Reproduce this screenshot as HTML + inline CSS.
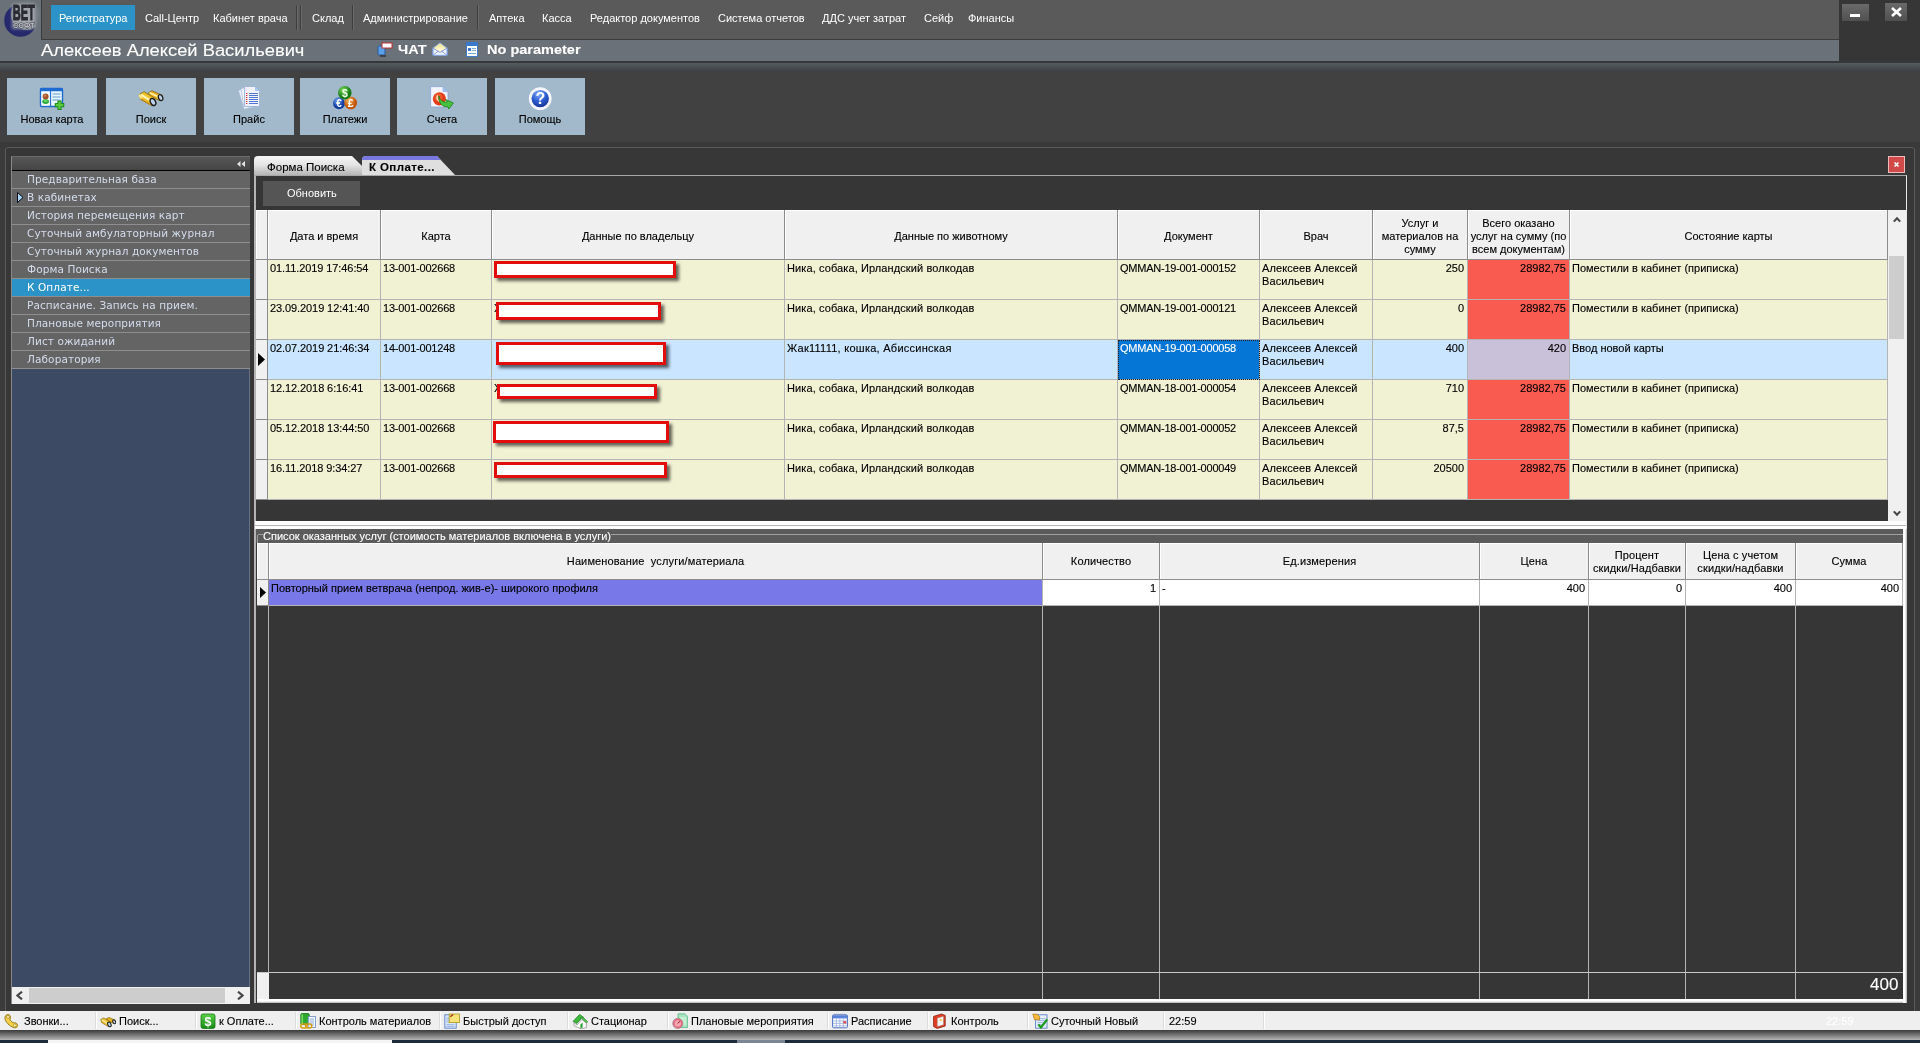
<!DOCTYPE html><html lang="ru"><head><meta charset="utf-8"><title>ВЕТ СОФТ</title><style>
html,body{margin:0;padding:0}
html{background:#3b3b3b}
body{will-change:transform;width:1920px;height:1043px;position:relative;overflow:hidden;background:#3b3b3b;font-family:"Liberation Sans",sans-serif;font-size:11px;line-height:13px;color:#000;-webkit-text-stroke-width:.12px}
body div,body span.t,body svg{position:absolute;box-sizing:border-box}
span.t{white-space:pre}
.w{color:#fff;-webkit-text-stroke-width:0}
.sb{font-family:"DejaVu Sans","Liberation Sans",sans-serif;font-size:10.5px;letter-spacing:.1px;-webkit-text-stroke-width:0;color:#d4dcec}
.hc{display:flex;align-items:center;justify-content:center;text-align:center;background:#f0f0f0;border-right:1px solid #8c8c8c;border-bottom:1px solid #8c8c8c;padding-top:4px;line-height:13px;box-shadow:inset 1px 1px 0 #fff}
.c{border-right:1px solid #b4b4b4;border-bottom:1px solid #b4b4b4;padding:2px 2px 0 2px;overflow:hidden;line-height:13px}
.r{text-align:right;padding-right:3px}
.btn{background:#a1b9ca;text-align:center}
.btn span{position:absolute;left:0;right:0;top:35px;text-align:center;font-size:11px}
.mi{color:#fff;font-size:11px;-webkit-text-stroke-width:0}
.sti{font-size:11px;color:#000}
</style></head><body>
<div style="left:0px;top:0px;width:1839px;height:62px;background:#6a7178"></div>
<div style="left:41px;top:0px;width:1798px;height:40px;background:#5a5a5a;border-left:1px solid #3c3c3c;border-bottom:1px solid #3a3c3e"></div>
<div style="left:1839px;top:0px;width:81px;height:62px;background:#363636"></div>
<div style="left:0px;top:61px;width:1920px;height:2px;background:#34383b"></div>
<div style="left:0px;top:63px;width:1920px;height:9px;background:linear-gradient(#555b60,#3d4043)"></div>
<div style="left:0px;top:72px;width:1920px;height:70px;background:#414141"></div>
<div style="left:0px;top:142px;width:1920px;height:6px;background:#393939"></div>
<svg style="left:0px;top:0px" width="41" height="40" viewBox="0 0 41 40"><defs><filter id="bl" x="-20%" y="-20%" width="140%" height="140%"><feGaussianBlur stdDeviation=".6"/></filter><filter id="b2" x="-30%" y="-30%" width="160%" height="160%"><feGaussianBlur stdDeviation="1.6"/></filter><clipPath id="lc"><circle cx="20.5" cy="20.5" r="16.6"/></clipPath></defs><circle cx="20.5" cy="20.5" r="16.3" fill="#262a6c" filter="url(#bl)"/><g clip-path="url(#lc)"><circle cx="26.5" cy="14.5" r="15.6" fill="#747b84" filter="url(#bl)"/></g><circle cx="27" cy="14" r="13" fill="#747b84" filter="url(#b2)"/><rect x="12" y="4" width="23" height="25" fill="#b4b8be" filter="url(#b2)" opacity=".7"/><text x="12.7" y="13.4" font-family="Liberation Sans, sans-serif" font-weight="bold" font-size="15" fill="#2b2b33" stroke="#2b2b33" stroke-width=".8" textLength="22" lengthAdjust="spacingAndGlyphs" transform="scale(1,1.5)">ВЕТ</text><text x="13" y="28" font-family="Liberation Sans, sans-serif" font-weight="bold" font-size="8" fill="#c4c8d0" stroke="#34363e" stroke-width="1" paint-order="stroke" textLength="21.5" lengthAdjust="spacingAndGlyphs">СОФТ</text></svg>
<div style="left:51px;top:5px;width:84px;height:25px;background:#2b93c8"></div>
<span class="t mi" style="left:59px;top:12px;">Регистратура</span>
<span class="t mi" style="left:145px;top:12px;">Call-Центр</span>
<span class="t mi" style="left:213px;top:12px;">Кабинет врача</span>
<span class="t mi" style="left:312px;top:12px;">Склад</span>
<span class="t mi" style="left:363px;top:12px;">Администрирование</span>
<span class="t mi" style="left:489px;top:12px;">Аптека</span>
<span class="t mi" style="left:542px;top:12px;">Касса</span>
<span class="t mi" style="left:590px;top:12px;">Редактор документов</span>
<span class="t mi" style="left:718px;top:12px;">Система отчетов</span>
<span class="t mi" style="left:822px;top:12px;">ДДС учет затрат</span>
<span class="t mi" style="left:924px;top:12px;">Сейф</span>
<span class="t mi" style="left:968px;top:12px;">Финансы</span>
<div style="left:296px;top:5px;width:2px;height:25px;background:#3e3e3e;border-right:1px solid #6a6a6a"></div>
<div style="left:300px;top:5px;width:2px;height:25px;background:#3e3e3e;border-right:1px solid #6a6a6a"></div>
<div style="left:352px;top:5px;width:2px;height:25px;background:#3e3e3e;border-right:1px solid #6a6a6a"></div>
<div style="left:477px;top:5px;width:2px;height:25px;background:#3e3e3e;border-right:1px solid #6a6a6a"></div>
<div style="left:1842px;top:4px;width:27px;height:17px;background:linear-gradient(#6a6a6a,#505050)"></div>
<div style="left:1850px;top:14px;width:10px;height:3px;background:#fff"></div>
<div style="left:1885px;top:3px;width:22px;height:18px;background:linear-gradient(#6a6a6a,#505050)"></div>
<svg style="left:1891px;top:7px" width="11" height="10" viewBox="0 0 11 10"><path d="M1 1L10 9M10 1L1 9" stroke="#fff" stroke-width="2.6"/></svg>
<span class="t" style="left:41px;top:42px;font-size:16px;line-height:18px;color:#fff;transform:scaleX(1.145);transform-origin:0 0">Алексеев Алексей Васильевич</span>
<span class="t" style="left:398px;top:42px;font-size:13.5px;line-height:15px;font-weight:bold;color:#fff;transform:scaleX(1.07);transform-origin:0 0">ЧАТ</span>
<span class="t" style="left:487px;top:42px;font-size:13.5px;line-height:15px;font-weight:bold;color:#fff;transform:scaleX(1.075);transform-origin:0 0">No parameter</span>
<svg style="left:376px;top:42px" width="17" height="16" viewBox="0 0 17 16"><rect x="2" y="4" width="7" height="9" rx="1" fill="#5aa0e8" stroke="#2a5a9a"/><rect x="6" y="1" width="10" height="5" fill="#fff" stroke="#c03030"/><path d="M4 14h6" stroke="#333" stroke-width="1.5"/></svg>
<svg style="left:432px;top:42px" width="16" height="14" viewBox="0 0 16 14"><path d="M1 6L8 .8L15 6V13.400H1Z" fill="#f6e9a4" stroke="#7f9fe0"/><path d="M3.200 5.500h9.600v4H3.200z" fill="#fdf6c8"/><path d="M1 6L8 10.500L15 6V13.400H1z" fill="#eef3ff" stroke="#7f9fe0"/><path d="M1 13.400L6.400 9M15 13.400L9.600 9" stroke="#7f9fe0"/></svg>
<svg style="left:466px;top:42px" width="12" height="15" viewBox="0 0 12 15"><rect x=".5" y=".5" width="11" height="14" fill="#fff" stroke="#3a7ac8"/><rect x="1" y="1" width="10" height="3" fill="#3a7ac8"/><rect x="2" y="6" width="3" height="3" fill="#3a7ac8"/><path d="M6 6.5h4M6 8.5h4M2 11.5h8" stroke="#7aa8dc"/></svg>
<div class="btn" style="left:7px;top:78px;width:90px;height:57px;"><span>Новая карта</span></div>
<div class="btn" style="left:106px;top:78px;width:90px;height:57px;"><span>Поиск</span></div>
<div class="btn" style="left:204px;top:78px;width:90px;height:57px;"><span>Прайс</span></div>
<div class="btn" style="left:300px;top:78px;width:90px;height:57px;"><span>Платежи</span></div>
<div class="btn" style="left:397px;top:78px;width:90px;height:57px;"><span>Счета</span></div>
<div class="btn" style="left:495px;top:78px;width:90px;height:57px;"><span>Помощь</span></div>
<svg style="left:39px;top:87px" width="26" height="24" viewBox="0 0 26 24"><rect x="1.5" y="1.5" width="22" height="18" rx="1.2" fill="#e6f6ff" stroke="#1e6ad0" stroke-width="1.4"/><rect x="1" y="1" width="23" height="3.2" rx="1" fill="#1e6ad0"/><path d="M11.5 4v15" stroke="#2a72d4" stroke-width="1.2"/><rect x="2.6" y="4.6" width="8" height="13.8" fill="#f4fcff"/><circle cx="6.6" cy="9.6" r="3" fill="#a4522a"/><circle cx="6" cy="8.8" r="1.3" fill="#d07a48"/><ellipse cx="6.6" cy="14.6" rx="3.4" ry="2.4" fill="#2aa83a"/><ellipse cx="6.6" cy="13.9" rx="2.2" ry="1" fill="#6ad86a"/><path d="M13.5 7h8M13.5 10h8M13.5 13h8" stroke="#6a9ad4" stroke-width="1"/><path d="M20.5 13.5v9.5M15.8 18.2h9.5" stroke="#1f8a1f" stroke-width="4.2"/><path d="M20.5 14.6v7.3M16.9 18.2h7.3" stroke="#58cc3c" stroke-width="2.2"/></svg>
<svg style="left:138px;top:90px" width="26" height="17" viewBox="0 0 26 17"><path d="M10.5 2.5L14 .8L24.6 5.4L22.2 10.8L12 6z" fill="#e6b222" stroke="#7a5808" stroke-width=".7"/><path d="M11.5 2.8l10.5 4.6" stroke="#fff2a8" stroke-width="1.6"/><ellipse cx="22.6" cy="7.6" rx="2" ry="3.1" transform="rotate(-24 22.6 7.6)" fill="#bcd2ea" stroke="#1c1c1c" stroke-width="1.3"/><path d="M1.2 4.6L6 1.6L17.4 8.6L13.6 15.6L2.4 9.2z" fill="#f0c02c" stroke="#7a5808" stroke-width=".7"/><path d="M3 4.8l11 6.6" stroke="#fff4b0" stroke-width="2.2"/><path d="M2.2 8.4l10 6" stroke="#c48a10" stroke-width="1.2"/><ellipse cx="15" cy="12" rx="2.5" ry="3.7" transform="rotate(-28 15 12)" fill="#bcd2ea" stroke="#1c1c1c" stroke-width="1.4"/><ellipse cx="2.4" cy="6.6" rx="1.4" ry="2.6" transform="rotate(-28 2.4 6.6)" fill="#fbe28a"/></svg>
<svg style="left:237px;top:85px" width="24" height="26" viewBox="0 0 24 26"><path d="M1.5 5.5L9 2.5l6 19-8 3z" fill="#f4f7fd" stroke="#a8bcdc" stroke-width=".8"/><path d="M4 3.5l9-1.5 3 20-9 2z" fill="#f8faff" stroke="#a8bcdc" stroke-width=".8"/><path d="M7.5 1.5h11l4 4v16h-15z" fill="#f2f2ff" stroke="#9cb2da" stroke-width=".9"/><path d="M18.5 1.5v4h4z" fill="#a6ccf2" stroke="#8aaee0" stroke-width=".6"/><path d="M12 8.5h9M12 10.5h9M12 12.5h9M12 14.5h9M12 16.5h9M12 18.5h9" stroke="#4f76d0" stroke-width="1"/><path d="M9.7 8v11.2" stroke="#d22020" stroke-width="1.3" stroke-dasharray="1 1"/></svg>
<svg style="left:332px;top:85px" width="26" height="26" viewBox="0 0 26 26"><defs><radialGradient id="g1" cx="38%" cy="30%"><stop offset="0" stop-color="#7edc5c"/><stop offset="1" stop-color="#167c16"/></radialGradient><radialGradient id="g2" cx="38%" cy="30%"><stop offset="0" stop-color="#6ea6f6"/><stop offset="1" stop-color="#153ea4"/></radialGradient><radialGradient id="g3" cx="38%" cy="30%"><stop offset="0" stop-color="#f8b862"/><stop offset="1" stop-color="#c2580c"/></radialGradient></defs><circle cx="7" cy="18.2" r="6" fill="url(#g2)"/><circle cx="18.7" cy="18" r="6.4" fill="url(#g3)"/><circle cx="12.8" cy="7.8" r="6.8" fill="url(#g1)"/><text x="12.8" y="11.6" text-anchor="middle" font-family="Liberation Sans, sans-serif" font-weight="bold" font-size="10.5" fill="#efffe8">$</text><text x="7" y="21.8" text-anchor="middle" font-family="Liberation Sans, sans-serif" font-weight="bold" font-size="10" fill="#fff">€</text><text x="18.7" y="21.8" text-anchor="middle" font-family="Liberation Sans, sans-serif" font-weight="bold" font-size="10.5" fill="#fff">£</text></svg>
<svg style="left:430px;top:86px" width="24" height="24" viewBox="0 0 24 24"><path d="M.6 .6h12.4l5 5V21H.6z" fill="#f2f5fd" stroke="#8ea6d6" stroke-width=".9"/><path d="M13 .6v5h5z" fill="#9cc4f0" stroke="#8ea6d6" stroke-width=".6"/><circle cx="9.4" cy="12.8" r="6.6" fill="#e43c16"/><circle cx="8.4" cy="11.2" r="4" fill="#f26a3a" opacity=".6"/><path d="M7.6 9.4c-1.6 3 .4 6.4 3.4 6.6" stroke="#ffe9c8" stroke-width="1.3" fill="none"/><path d="M9 10c.6 4.4 4 6.4 8.2 6.2l-1.4-2.6L23.4 17l-4.6 6-1.2-2.4C12.400 21.400 8.200 17 9 10z" fill="#46c23e" stroke="#178017" stroke-width=".8"/></svg>
<svg style="left:528px;top:86px" width="25" height="25" viewBox="0 0 25 25"><defs><radialGradient id="g4" cx="42%" cy="22%" r="80%"><stop offset="0" stop-color="#86b0f8"/><stop offset=".55" stop-color="#2c5cd2"/><stop offset="1" stop-color="#173494"/></radialGradient><filter id="hb" x="-20%" y="-20%" width="140%" height="140%"><feGaussianBlur stdDeviation=".5"/></filter></defs><circle cx="12.2" cy="12.6" r="11.4" fill="#f4f6fc" filter="url(#hb)"/><circle cx="12.2" cy="12.6" r="8.7" fill="url(#g4)"/><text x="12.3" y="18.2" text-anchor="middle" font-family="Liberation Sans, sans-serif" font-weight="bold" font-size="16" fill="#fff">?</text></svg>
<div style="left:5px;top:147px;width:1910px;height:867px;border:1px solid #5a5a5a;border-radius:3px;background:#373737"></div>
<div style="left:11px;top:156px;width:239px;height:848px;background:#3d4a63;border-left:1px solid #8a8a8a;border-top:1px solid #6a6a6a;border-right:1px solid #687084"></div>
<div style="left:12px;top:157px;width:238px;height:13px;background:linear-gradient(#585858,#444)"></div>
<div style="left:12px;top:170px;width:238px;height:1px;background:#000"></div>
<svg style="left:237px;top:161px" width="8" height="6" viewBox="0 0 8 6"><path d="M3.500 0v6L0 3zM8 0v6L4.500 3z" fill="#e4e4e4"/></svg>
<div style="left:12px;top:171px;width:238px;height:18px;background:#646464;border-bottom:1px solid #8e8e8e"></div>
<span class="t sb" style="left:27px;top:173px;">Предварительная база</span>
<div style="left:12px;top:189px;width:238px;height:18px;background:#646464;border-bottom:1px solid #8e8e8e"></div>
<span class="t sb" style="left:27px;top:191px;">В кабинетах</span>
<div style="left:12px;top:207px;width:238px;height:18px;background:#646464;border-bottom:1px solid #8e8e8e"></div>
<span class="t sb" style="left:27px;top:209px;">История перемещения карт</span>
<div style="left:12px;top:225px;width:238px;height:18px;background:#646464;border-bottom:1px solid #8e8e8e"></div>
<span class="t sb" style="left:27px;top:227px;">Суточный амбулаторный журнал</span>
<div style="left:12px;top:243px;width:238px;height:18px;background:#646464;border-bottom:1px solid #8e8e8e"></div>
<span class="t sb" style="left:27px;top:245px;">Суточный журнал документов</span>
<div style="left:12px;top:261px;width:238px;height:18px;background:#646464;border-bottom:1px solid #8e8e8e"></div>
<span class="t sb" style="left:27px;top:263px;">Форма Поиска</span>
<div style="left:12px;top:279px;width:238px;height:18px;background:#2b93c8;border-bottom:1px solid #8e8e8e"></div>
<span class="t sb" style="left:27px;top:281px;color:#fff;">К Оплате...</span>
<div style="left:12px;top:297px;width:238px;height:18px;background:#646464;border-bottom:1px solid #8e8e8e"></div>
<span class="t sb" style="left:27px;top:299px;">Расписание. Запись на прием.</span>
<div style="left:12px;top:315px;width:238px;height:18px;background:#646464;border-bottom:1px solid #8e8e8e"></div>
<span class="t sb" style="left:27px;top:317px;">Плановые мероприятия</span>
<div style="left:12px;top:333px;width:238px;height:18px;background:#646464;border-bottom:1px solid #8e8e8e"></div>
<span class="t sb" style="left:27px;top:335px;">Лист ожиданий</span>
<div style="left:12px;top:351px;width:238px;height:18px;background:#646464;border-bottom:1px solid #8e8e8e"></div>
<span class="t sb" style="left:27px;top:353px;">Лаборатория</span>
<svg style="left:17px;top:192px" width="7" height="11" viewBox="0 0 7 11"><path d="M.5 .5L6 5.500L.5 10.500z" fill="#a4d6ff" stroke="#050a14"/></svg>
<div style="left:12px;top:987px;width:238px;height:17px;background:#f0f0f0"></div>
<div style="left:29px;top:988px;width:196px;height:15px;background:#cdcdcd"></div>
<svg style="left:16px;top:991px" width="7" height="9" viewBox="0 0 7 9"><path d="M6 .7L1.5 4.5L6 8.3" fill="none" stroke="#484848" stroke-width="2.2"/></svg>
<svg style="left:237px;top:991px" width="7" height="9" viewBox="0 0 7 9"><path d="M1 .7L5.5 4.5L1 8.3" fill="none" stroke="#484848" stroke-width="2.2"/></svg>
<svg style="left:254px;top:156px" width="204" height="20" viewBox="0 0 204 20"><defs><linearGradient id="tg" x1="0" y1="0" x2="0" y2="1"><stop offset="0" stop-color="#f6f6f6"/><stop offset=".45" stop-color="#e4e4e4"/><stop offset="1" stop-color="#b0b0b0"/></linearGradient></defs><path d="M0 20V4Q0 0 4 0H98L118 20z" fill="url(#tg)"/><path d="M108 20V4Q108 0 112 0H183L202 20z" fill="#dfdfdf"/><path d="M108 4Q108 0 112 0H183L186.800 4z" fill="#7878e0"/></svg>
<span class="t" style="left:267px;top:161px;font-size:11.5px">Форма Поиска</span>
<span class="t" style="left:369px;top:161px;font-size:11.5px;font-weight:bold;letter-spacing:.4px">К Оплате...</span>
<div style="left:254px;top:175px;width:1653px;height:828px;background:#363636;border-left:2px solid #b4b4b4;border-top:1px solid #a8a8a8;border-right:1px solid #e8e8e8"></div>
<div style="left:1888px;top:156px;width:17px;height:17px;background:#d04a4a;border:1px solid #eebcbc"></div>
<svg style="left:1894px;top:162px" width="5" height="5" viewBox="0 0 5 5"><path d="M.5 .5L4.500 4.500M4.500 .5L.5 4.500" stroke="#fff" stroke-width="1.5"/></svg>
<div style="left:263px;top:181px;width:97px;height:25px;background:#555"></div>
<span class="t w" style="left:287px;top:187px;">Обновить</span>
<div class="hc" style="left:256px;top:210px;width:12px;height:50px;"></div>
<div class="hc" style="left:268px;top:210px;width:113px;height:50px;">Дата и время</div>
<div class="hc" style="left:381px;top:210px;width:111px;height:50px;">Карта</div>
<div class="hc" style="left:492px;top:210px;width:293px;height:50px;">Данные по владельцу</div>
<div class="hc" style="left:785px;top:210px;width:333px;height:50px;">Данные по животному</div>
<div class="hc" style="left:1118px;top:210px;width:142px;height:50px;">Документ</div>
<div class="hc" style="left:1260px;top:210px;width:113px;height:50px;">Врач</div>
<div class="hc" style="left:1373px;top:210px;width:95px;height:50px;">Услуг и<br>материалов на<br>сумму</div>
<div class="hc" style="left:1468px;top:210px;width:102px;height:50px;">Всего оказано<br>услуг на сумму (по<br>всем документам)</div>
<div class="hc" style="left:1570px;top:210px;width:318px;height:50px;">Состояние карты</div>
<div style="left:256px;top:260px;width:12px;height:40px;background:#f0f0f0;border-right:1px solid #8c8c8c;border-bottom:1px solid #8c8c8c"></div>
<div class="c" style="left:268px;top:260px;width:113px;height:40px;background:#f1f1d3;letter-spacing:-.09px;">01.11.2019 17:46:54</div>
<div class="c" style="left:381px;top:260px;width:111px;height:40px;background:#f1f1d3;letter-spacing:-.2px;">13-001-002668</div>
<div class="c" style="left:492px;top:260px;width:293px;height:40px;background:#f1f1d3;"></div>
<div class="c" style="left:785px;top:260px;width:333px;height:40px;background:#f1f1d3;letter-spacing:.1px;">Ника, собака, Ирландский волкодав</div>
<div class="c" style="left:1118px;top:260px;width:142px;height:40px;background:#f1f1d3;letter-spacing:-.24px;">QMMAN-19-001-000152</div>
<div class="c" style="left:1260px;top:260px;width:113px;height:40px;background:#f1f1d3;letter-spacing:.1px;">Алексеев Алексей Васильевич</div>
<div class="c r" style="left:1373px;top:260px;width:95px;height:40px;background:#f1f1d3;">250</div>
<div class="c r" style="left:1468px;top:260px;width:102px;height:40px;background:#fa5b50;">28982,75</div>
<div class="c" style="left:1570px;top:260px;width:318px;height:40px;background:#f1f1d3;">Поместили в кабинет (приписка)</div>
<div style="left:494px;top:261px;width:182px;height:17px;background:#fff;border:3px solid #e20d0d;box-shadow:3px 3px 3px rgba(0,0,0,.6)"></div>
<div style="left:256px;top:300px;width:12px;height:40px;background:#f0f0f0;border-right:1px solid #8c8c8c;border-bottom:1px solid #8c8c8c"></div>
<div class="c" style="left:268px;top:300px;width:113px;height:40px;background:#f1f1d3;letter-spacing:-.09px;">23.09.2019 12:41:40</div>
<div class="c" style="left:381px;top:300px;width:111px;height:40px;background:#f1f1d3;letter-spacing:-.2px;">13-001-002668</div>
<div class="c" style="left:492px;top:300px;width:293px;height:40px;background:#f1f1d3;">Х</div>
<div class="c" style="left:785px;top:300px;width:333px;height:40px;background:#f1f1d3;letter-spacing:.1px;">Ника, собака, Ирландский волкодав</div>
<div class="c" style="left:1118px;top:300px;width:142px;height:40px;background:#f1f1d3;letter-spacing:-.24px;">QMMAN-19-001-000121</div>
<div class="c" style="left:1260px;top:300px;width:113px;height:40px;background:#f1f1d3;letter-spacing:.1px;">Алексеев Алексей Васильевич</div>
<div class="c r" style="left:1373px;top:300px;width:95px;height:40px;background:#f1f1d3;">0</div>
<div class="c r" style="left:1468px;top:300px;width:102px;height:40px;background:#fa5b50;">28982,75</div>
<div class="c" style="left:1570px;top:300px;width:318px;height:40px;background:#f1f1d3;">Поместили в кабинет (приписка)</div>
<div style="left:496px;top:302px;width:165px;height:18px;background:#fff;border:3px solid #e20d0d;box-shadow:3px 3px 3px rgba(0,0,0,.6)"></div>
<div style="left:256px;top:340px;width:12px;height:40px;background:#f0f0f0;border-right:1px solid #8c8c8c;border-bottom:1px solid #8c8c8c"></div>
<div class="c" style="left:268px;top:340px;width:113px;height:40px;background:#c9e5ff;letter-spacing:-.09px;">02.07.2019 21:46:34</div>
<div class="c" style="left:381px;top:340px;width:111px;height:40px;background:#c9e5ff;letter-spacing:-.2px;">14-001-001248</div>
<div class="c" style="left:492px;top:340px;width:293px;height:40px;background:#c9e5ff;"></div>
<div class="c" style="left:785px;top:340px;width:333px;height:40px;background:#c9e5ff;letter-spacing:.26px;">Жак11111, кошка, Абиссинская</div>
<div class="c" style="left:1118px;top:340px;width:142px;height:40px;background:#0575d6;color:#fff;outline:1px dotted #222;outline-offset:-1px;letter-spacing:-.24px;">QMMAN-19-001-000058</div>
<div class="c" style="left:1260px;top:340px;width:113px;height:40px;background:#c9e5ff;letter-spacing:.1px;">Алексеев Алексей Васильевич</div>
<div class="c r" style="left:1373px;top:340px;width:95px;height:40px;background:#c9e5ff;">400</div>
<div class="c r" style="left:1468px;top:340px;width:102px;height:40px;background:#c9c1d9;">420</div>
<div class="c" style="left:1570px;top:340px;width:318px;height:40px;background:#c9e5ff;">Ввод новой карты</div>
<div style="left:496px;top:342px;width:170px;height:23px;background:#fff;border:3px solid #e20d0d;box-shadow:3px 3px 3px rgba(0,0,0,.6)"></div>
<div style="left:256px;top:380px;width:12px;height:40px;background:#f0f0f0;border-right:1px solid #8c8c8c;border-bottom:1px solid #8c8c8c"></div>
<div class="c" style="left:268px;top:380px;width:113px;height:40px;background:#f1f1d3;letter-spacing:-.09px;">12.12.2018 6:16:41</div>
<div class="c" style="left:381px;top:380px;width:111px;height:40px;background:#f1f1d3;letter-spacing:-.2px;">13-001-002668</div>
<div class="c" style="left:492px;top:380px;width:293px;height:40px;background:#f1f1d3;">Х</div>
<div class="c" style="left:785px;top:380px;width:333px;height:40px;background:#f1f1d3;letter-spacing:.1px;">Ника, собака, Ирландский волкодав</div>
<div class="c" style="left:1118px;top:380px;width:142px;height:40px;background:#f1f1d3;letter-spacing:-.24px;">QMMAN-18-001-000054</div>
<div class="c" style="left:1260px;top:380px;width:113px;height:40px;background:#f1f1d3;letter-spacing:.1px;">Алексеев Алексей Васильевич</div>
<div class="c r" style="left:1373px;top:380px;width:95px;height:40px;background:#f1f1d3;">710</div>
<div class="c r" style="left:1468px;top:380px;width:102px;height:40px;background:#fa5b50;">28982,75</div>
<div class="c" style="left:1570px;top:380px;width:318px;height:40px;background:#f1f1d3;">Поместили в кабинет (приписка)</div>
<div style="left:497px;top:384px;width:160px;height:15px;background:#fff;border:3px solid #e20d0d;box-shadow:3px 3px 3px rgba(0,0,0,.6)"></div>
<div style="left:256px;top:420px;width:12px;height:40px;background:#f0f0f0;border-right:1px solid #8c8c8c;border-bottom:1px solid #8c8c8c"></div>
<div class="c" style="left:268px;top:420px;width:113px;height:40px;background:#f1f1d3;letter-spacing:-.09px;">05.12.2018 13:44:50</div>
<div class="c" style="left:381px;top:420px;width:111px;height:40px;background:#f1f1d3;letter-spacing:-.2px;">13-001-002668</div>
<div class="c" style="left:492px;top:420px;width:293px;height:40px;background:#f1f1d3;"></div>
<div class="c" style="left:785px;top:420px;width:333px;height:40px;background:#f1f1d3;letter-spacing:.1px;">Ника, собака, Ирландский волкодав</div>
<div class="c" style="left:1118px;top:420px;width:142px;height:40px;background:#f1f1d3;letter-spacing:-.24px;">QMMAN-18-001-000052</div>
<div class="c" style="left:1260px;top:420px;width:113px;height:40px;background:#f1f1d3;letter-spacing:.1px;">Алексеев Алексей Васильевич</div>
<div class="c r" style="left:1373px;top:420px;width:95px;height:40px;background:#f1f1d3;">87,5</div>
<div class="c r" style="left:1468px;top:420px;width:102px;height:40px;background:#fa5b50;">28982,75</div>
<div class="c" style="left:1570px;top:420px;width:318px;height:40px;background:#f1f1d3;">Поместили в кабинет (приписка)</div>
<div style="left:493px;top:421px;width:176px;height:22px;background:#fff;border:3px solid #e20d0d;box-shadow:3px 3px 3px rgba(0,0,0,.6)"></div>
<div style="left:256px;top:460px;width:12px;height:40px;background:#f0f0f0;border-right:1px solid #8c8c8c;border-bottom:1px solid #8c8c8c"></div>
<div class="c" style="left:268px;top:460px;width:113px;height:40px;background:#f1f1d3;letter-spacing:-.09px;">16.11.2018 9:34:27</div>
<div class="c" style="left:381px;top:460px;width:111px;height:40px;background:#f1f1d3;letter-spacing:-.2px;">13-001-002668</div>
<div class="c" style="left:492px;top:460px;width:293px;height:40px;background:#f1f1d3;"></div>
<div class="c" style="left:785px;top:460px;width:333px;height:40px;background:#f1f1d3;letter-spacing:.1px;">Ника, собака, Ирландский волкодав</div>
<div class="c" style="left:1118px;top:460px;width:142px;height:40px;background:#f1f1d3;letter-spacing:-.24px;">QMMAN-18-001-000049</div>
<div class="c" style="left:1260px;top:460px;width:113px;height:40px;background:#f1f1d3;letter-spacing:.1px;">Алексеев Алексей Васильевич</div>
<div class="c r" style="left:1373px;top:460px;width:95px;height:40px;background:#f1f1d3;">20500</div>
<div class="c r" style="left:1468px;top:460px;width:102px;height:40px;background:#fa5b50;">28982,75</div>
<div class="c" style="left:1570px;top:460px;width:318px;height:40px;background:#f1f1d3;">Поместили в кабинет (приписка)</div>
<div style="left:494px;top:462px;width:173px;height:16px;background:#fff;border:3px solid #e20d0d;box-shadow:3px 3px 3px rgba(0,0,0,.6)"></div>
<svg style="left:258px;top:353px" width="7" height="13" viewBox="0 0 7 13"><path d="M0 0L7 6.5L0 13z" fill="#000"/></svg>
<div style="left:1888px;top:210px;width:18px;height:311px;background:#f0f0f0"></div>
<div style="left:1889px;top:256px;width:15px;height:83px;background:#cdcdcd"></div>
<svg style="left:1893px;top:216px" width="8" height="7" viewBox="0 0 8 7"><path d="M.8 5.600L4 2.200L7.200 5.600" fill="none" stroke="#484848" stroke-width="2.1"/></svg>
<svg style="left:1893px;top:510px" width="8" height="7" viewBox="0 0 8 7"><path d="M.8 1.400L4 4.800L7.200 1.400" fill="none" stroke="#484848" stroke-width="2.1"/></svg>
<div style="left:255px;top:521px;width:1651px;height:8px;background:#fdfdfd"></div>
<div style="left:255px;top:525px;width:1651px;height:1px;background:#b4b4b4"></div>
<div style="left:256px;top:529px;width:1649px;height:14px;background:#5b5b5b"></div>
<div style="left:258px;top:534px;width:1646px;height:1px;background:#a0a0a0"></div>
<div style="left:257px;top:535px;width:1px;height:8px;background:#a0a0a0"></div>
<span class="t" style="left:263px;top:530px;color:#fff;background:#5b5b5b">Список оказанных услуг (стоимость материалов включена в услуги)</span>
<div class="hc" style="left:257px;top:543px;width:12px;height:37px;padding-top:1px;letter-spacing:.12px"></div>
<div class="hc" style="left:269px;top:543px;width:774px;height:37px;padding-top:1px;letter-spacing:.12px">Наименование&nbsp; услуги/материала</div>
<div class="hc" style="left:1043px;top:543px;width:117px;height:37px;padding-top:1px;letter-spacing:.12px">Количество</div>
<div class="hc" style="left:1160px;top:543px;width:320px;height:37px;padding-top:1px;letter-spacing:.12px">Ед.измерения</div>
<div class="hc" style="left:1480px;top:543px;width:109px;height:37px;padding-top:1px;letter-spacing:.12px">Цена</div>
<div class="hc" style="left:1589px;top:543px;width:97px;height:37px;padding-top:1px;letter-spacing:.12px">Процент<br>скидки/Надбавки</div>
<div class="hc" style="left:1686px;top:543px;width:110px;height:37px;padding-top:1px;letter-spacing:.12px">Цена с учетом<br>скидки/надбавки</div>
<div class="hc" style="left:1796px;top:543px;width:107px;height:37px;padding-top:1px;letter-spacing:.12px">Сумма</div>
<div style="left:257px;top:580px;width:12px;height:26px;background:#f0f0f0;border-right:1px solid #8c8c8c;border-bottom:1px solid #8c8c8c"></div>
<svg style="left:260px;top:587px" width="6" height="11" viewBox="0 0 6 11"><path d="M0 0L6 5.5L0 11z" fill="#000"/></svg>
<div class="c" style="left:269px;top:580px;width:774px;height:26px;background:#7878e8;">Повторный прием ветврача (непрод. жив-е)- широкого профиля</div>
<div class="c r" style="left:1043px;top:580px;width:117px;height:26px;background:#fff;">1</div>
<div class="c" style="left:1160px;top:580px;width:320px;height:26px;background:#fff;">-</div>
<div class="c r" style="left:1480px;top:580px;width:109px;height:26px;background:#fff;">400</div>
<div class="c r" style="left:1589px;top:580px;width:97px;height:26px;background:#fff;">0</div>
<div class="c r" style="left:1686px;top:580px;width:110px;height:26px;background:#fff;">400</div>
<div class="c r" style="left:1796px;top:580px;width:107px;height:26px;background:#fff;">400</div>
<div style="left:268px;top:606px;width:1px;height:393px;background:#b4b4b4"></div>
<div style="left:1042px;top:606px;width:1px;height:393px;background:#b4b4b4"></div>
<div style="left:1159px;top:606px;width:1px;height:393px;background:#b4b4b4"></div>
<div style="left:1479px;top:606px;width:1px;height:393px;background:#b4b4b4"></div>
<div style="left:1588px;top:606px;width:1px;height:393px;background:#b4b4b4"></div>
<div style="left:1685px;top:606px;width:1px;height:393px;background:#b4b4b4"></div>
<div style="left:1795px;top:606px;width:1px;height:393px;background:#b4b4b4"></div>
<div style="left:257px;top:972px;width:1646px;height:1px;background:#c8c8c8"></div>
<div style="left:257px;top:973px;width:12px;height:26px;background:#f0f0f0"></div>
<span class="t" style="left:1870px;top:975px;font-size:17px;line-height:19px;color:#fff">400</span>
<div style="left:257px;top:999px;width:1650px;height:4px;background:linear-gradient(#fff,#fff 50%,#b0b0b0)"></div>
<div style="left:1903px;top:529px;width:4px;height:474px;background:linear-gradient(90deg,#fff,#fff 50%,#b0b0b0)"></div>
<div style="left:0px;top:1011px;width:1920px;height:20px;background:#efefef"></div>
<div style="left:0px;top:1030px;width:1920px;height:10px;background:linear-gradient(#3a3a3a,#b4b4b4)"></div>
<div style="left:0px;top:1040px;width:1920px;height:3px;background:#1c2c3c"></div>
<div style="left:48px;top:1040px;width:344px;height:3px;background:#f4f4f4"></div>
<div style="left:737px;top:1040px;width:48px;height:3px;background:#7a8694"></div>
<span class="t sti" style="left:24px;top:1015px;">Звонки...</span>
<span class="t sti" style="left:119px;top:1015px;">Поиск...</span>
<span class="t sti" style="left:219px;top:1015px;">к Оплате...</span>
<span class="t sti" style="left:319px;top:1015px;">Контроль материалов</span>
<span class="t sti" style="left:463px;top:1015px;">Быстрый доступ</span>
<span class="t sti" style="left:591px;top:1015px;">Стационар</span>
<span class="t sti" style="left:691px;top:1015px;">Плановые мероприятия</span>
<span class="t sti" style="left:851px;top:1015px;">Расписание</span>
<span class="t sti" style="left:951px;top:1015px;">Контроль</span>
<span class="t sti" style="left:1051px;top:1015px;">Суточный Новый</span>
<span class="t sti" style="left:1169px;top:1015px;">22:59</span>
<div style="left:95px;top:1012px;width:2px;height:17px;background:#dcdcdc;border-right:1px solid #fff"></div>
<div style="left:195px;top:1012px;width:2px;height:17px;background:#dcdcdc;border-right:1px solid #fff"></div>
<div style="left:295px;top:1012px;width:2px;height:17px;background:#dcdcdc;border-right:1px solid #fff"></div>
<div style="left:439px;top:1012px;width:2px;height:17px;background:#dcdcdc;border-right:1px solid #fff"></div>
<div style="left:567px;top:1012px;width:2px;height:17px;background:#dcdcdc;border-right:1px solid #fff"></div>
<div style="left:667px;top:1012px;width:2px;height:17px;background:#dcdcdc;border-right:1px solid #fff"></div>
<div style="left:827px;top:1012px;width:2px;height:17px;background:#dcdcdc;border-right:1px solid #fff"></div>
<div style="left:927px;top:1012px;width:2px;height:17px;background:#dcdcdc;border-right:1px solid #fff"></div>
<div style="left:1027px;top:1012px;width:2px;height:17px;background:#dcdcdc;border-right:1px solid #fff"></div>
<div style="left:1163px;top:1012px;width:2px;height:17px;background:#dcdcdc;border-right:1px solid #fff"></div>
<div style="left:1263px;top:1012px;width:2px;height:17px;background:#dcdcdc;border-right:1px solid #fff"></div>
<span class="t" style="left:1826px;top:1015px;color:#fff">22:59</span>
<svg style="left:3px;top:1013px" width="16" height="16" viewBox="0 0 16 16"><path d="M3.200 2.200C5.400 .6 8.200 2.400 7.200 5c-.6 1.600.4 3 2 4.200 1.400 1 3.200.2 4.400 1.200 1.800 1.600.8 4.600-1.800 4.400C8.400 14.600 3.600 10.400 2.200 6.600 1.600 4.800 2 3.200 3.200 2.200z" fill="#f6d24a" stroke="#8a6a0c" stroke-width=".9"/><circle cx="5" cy="4" r="1.500" fill="#fff2b0" stroke="#a07c10" stroke-width=".6"/><circle cx="11.800" cy="12.400" r="1.500" fill="#fff2b0" stroke="#a07c10" stroke-width=".6"/></svg>
<svg style="left:100px;top:1013px" width="16" height="16" viewBox="0 0 16 16"><path d="M6.500 5.500L9 4.400L15.400 7.200L14 10.600L7.400 7.800z" fill="#e6b222" stroke="#7a5808" stroke-width=".6"/><ellipse cx="14.200" cy="8.800" rx="1.300" ry="2" transform="rotate(-24 14.200 8.800)" fill="#bcd2ea" stroke="#1c1c1c" stroke-width="1"/><path d="M.8 6.600L3.800 4.800L10.800 9.200L8.400 13.600L1.600 9.600z" fill="#f0c02c" stroke="#7a5808" stroke-width=".6"/><path d="M2 7l6.600 4" stroke="#fff4b0" stroke-width="1.400"/><ellipse cx="9.400" cy="11.400" rx="1.600" ry="2.400" transform="rotate(-28 9.400 11.400)" fill="#bcd2ea" stroke="#1c1c1c" stroke-width="1"/></svg>
<svg style="left:200px;top:1013px" width="16" height="16" viewBox="0 0 16 16"><defs><linearGradient id="dg" x1="0" y1="0" x2="0" y2="1"><stop offset="0" stop-color="#5ad24a"/><stop offset="1" stop-color="#178a17"/></linearGradient></defs><rect x="1" y="1" width="14" height="14.400" rx="2" fill="url(#dg)" stroke="#147814" stroke-width=".8"/><text x="8" y="13" text-anchor="middle" font-family="Liberation Sans, sans-serif" font-weight="bold" font-size="12.500" fill="#fff">$</text></svg>
<svg style="left:300px;top:1013px" width="16" height="16" viewBox="0 0 16 16"><rect x=".8" y=".6" width="8.400" height="11" rx="1" fill="#2ea82e" stroke="#146c14" stroke-width=".8"/><path d="M2.200 1.200v10" stroke="#7ee06a" stroke-width="1.400"/><rect x="8.200" y="3.400" width="7.200" height="11" fill="#f4f8ff" stroke="#6a86c0" stroke-width=".8"/><path d="M9.600 6h4.400M9.600 8h4.400M9.600 10h4.400M9.600 12h4.400" stroke="#7a9ad0" stroke-width=".8"/><rect x=".8" y="11" width="6.200" height="4" rx="2" fill="none" stroke="#d4a010" stroke-width="1.500"/><rect x="5.600" y="11" width="6.200" height="4" rx="2" fill="none" stroke="#d4a010" stroke-width="1.500"/></svg>
<svg style="left:444px;top:1013px" width="16" height="16" viewBox="0 0 16 16"><rect x=".8" y="1.800" width="11.400" height="13.400" fill="#dce8fa" stroke="#5a82c8" stroke-width=".9"/><path d="M2.400 5h4M2.400 7h3M2.400 9h3M2.400 11.600h8M2.400 13.400h8" stroke="#8aa8dc" stroke-width=".8"/><rect x="5.200" y="1" width="10.200" height="8.600" fill="#f8e27a" stroke="#b09420" stroke-width=".8"/><path d="M6.400 3.800L9 1.400" stroke="#a03010" stroke-width="1.400"/></svg>
<svg style="left:572px;top:1013px" width="16" height="16" viewBox="0 0 16 16"><path d="M1 8.400L7.600 1.400l3.200 2.400L4.800 10.400z" fill="#3cb83c" stroke="#1a7a1a" stroke-width=".7"/><path d="M10.800 3.800L15.600 9l-1.200 1-4.400-4z" fill="#58cc50" stroke="#1a7a1a" stroke-width=".7"/><path d="M2 9.600l3 2.400 5-5.600 4.400 4v4.200L9 15.800 2 12.600z" fill="#fbfbfb" stroke="#8a8a8a" stroke-width=".7"/><path d="M8.400 11.400l2.200-1.800v5l-2.200 1z" fill="#2ea02e"/></svg>
<svg style="left:672px;top:1013px" width="16" height="16" viewBox="0 0 16 16"><path d="M6 .8h7l2.600 2.600V14.600H6z" fill="#a8e4c0" stroke="#5ab88a" stroke-width=".8"/><path d="M8 5h6M8 7h6M8 9h6M8 11h6" stroke="#e8fff2" stroke-width=".9"/><circle cx="5.800" cy="10.400" r="5" fill="#e8647c" stroke="#b08890" stroke-width="1"/><circle cx="5.800" cy="10.400" r="3.200" fill="#f6a4b0"/><path d="M5.800 10.400L8 8.200" stroke="#7a1020" stroke-width="1"/></svg>
<svg style="left:832px;top:1013px" width="16" height="16" viewBox="0 0 16 16"><rect x=".6" y="1.800" width="14.800" height="13" rx="1" fill="#fff" stroke="#4a6ec0" stroke-width="1"/><rect x="1" y="2.200" width="14" height="3.200" fill="#5a82d8"/><path d="M1 8h14M1 10.400h14M1 12.800h14M4.400 5.400v9M7.800 5.400v9M11.200 5.400v9" stroke="#9ab0dc" stroke-width=".8"/><rect x="11.400" y="8.200" width="2.800" height="2.200" fill="#e04040"/><path d="M2.500 .6v2M4.500 .6v2M6.500 .6v2M8.500 .6v2M10.500 .6v2M12.500 .6v2" stroke="#8a9ac0" stroke-width=".8"/></svg>
<svg style="left:932px;top:1013px" width="16" height="16" viewBox="0 0 16 16"><path d="M1.600 3.400L9.400 1l3.800 1.400V13l-8 2.400-3.600-1.800z" fill="#e23c24" stroke="#8a1c0c" stroke-width=".8"/><path d="M5.200 5l6.400-1.800v8.600l-6.400 2z" fill="#f2f6fc" stroke="#b06a5a" stroke-width=".6"/><path d="M6.600 8l2.200-2.400L11 7.400" fill="#f8c848"/></svg>
<svg style="left:1032px;top:1013px" width="16" height="16" viewBox="0 0 16 16"><rect x="3.600" y="1.800" width="11.400" height="13.400" fill="#e6effc" stroke="#5a82c8" stroke-width=".9"/><path d="M5.400 5.600h8M5.400 7.600h8M5.400 9.600h8M5.400 11.600h5" stroke="#8aa8dc" stroke-width=".8"/><path d="M.8 1.200h4.400l2.400 2.400v3.200H2.600z" fill="#f8b838" stroke="#a87810" stroke-width=".7"/><path d="M6.400 11.400l2.600 3 6.200-8" fill="none" stroke="#1f9a1f" stroke-width="2.300"/></svg>
</body></html>
